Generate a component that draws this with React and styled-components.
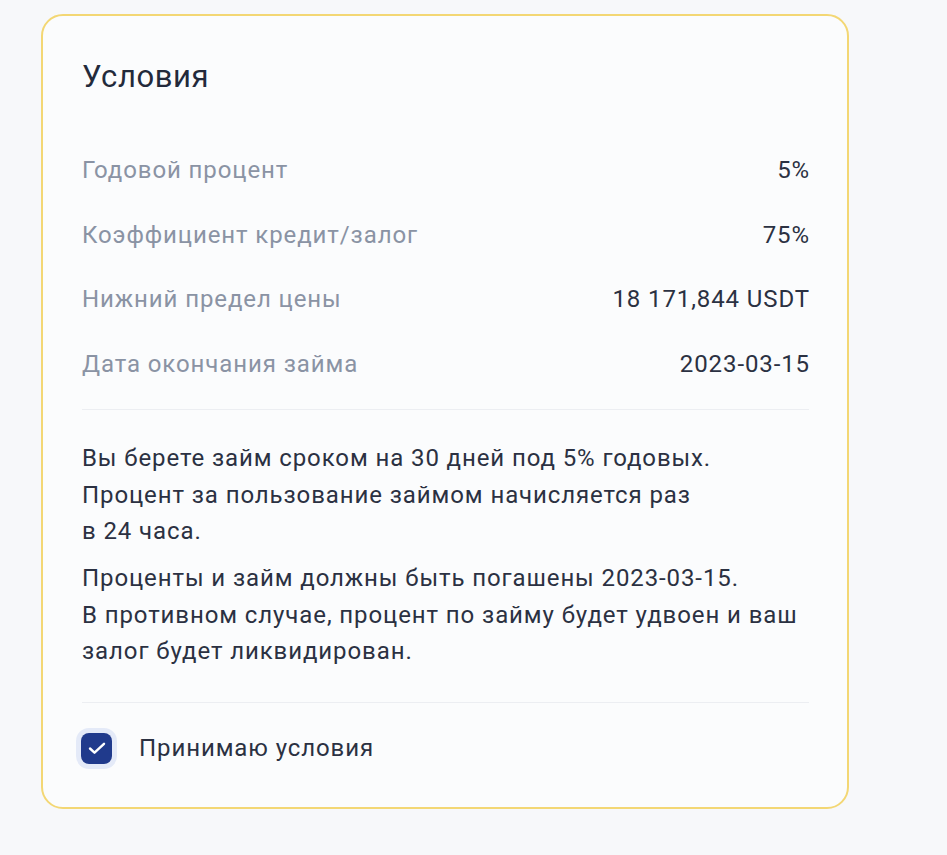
import React from "react";
import styled, { createGlobalStyle } from "styled-components";

const Global = createGlobalStyle`
  html, body { margin: 0; padding: 0; background: #f7f8fa; }
  body { font-family: Roboto, "Noto Sans", Arial, sans-serif; -webkit-font-smoothing: antialiased; }
`;

const Page = styled.div`
  padding: 14px 0 0 41px;
  width: 947px;
  height: 855px;
  box-sizing: border-box;
`;

const Card = styled.section`
  width: 808px;
  box-sizing: border-box;
  background: #fbfcfd;
  border: 2px solid #f3d774;
  border-radius: 22px;
  padding: 42px 38px 43px 39px;
  display: flex;
  flex-direction: column;
`;

const Title = styled.h2`
  margin: 0 0 56px;
  font-weight: 400;
  font-size: 31px;
  letter-spacing: 0.6px;
  line-height: 38px;
  color: #232a3b;
`;

const List = styled.div`
  display: flex;
  flex-direction: column;
  gap: 27.7px;
  padding-bottom: 26px;
  border-bottom: 1px solid #eceef2;
`;

const Row = styled.div`
  display: flex;
  justify-content: space-between;
  align-items: center;
  font-size: 24px;
  letter-spacing: 0.9px;
  line-height: 37px;
`;

const Label = styled.span`
  color: #8a93a4;
`;

const Value = styled.span`
  color: #2b3142;
  margin-right: -1px;
`;

const Text = styled.div`
  padding: 30px 0 32px;
  border-bottom: 1px solid #eceef2;
  display: flex;
  flex-direction: column;
  gap: 10.5px;
`;

const Para = styled.p`
  margin: 0;
  font-size: 24px;
  letter-spacing: 0.9px;
  line-height: 36.5px;
  color: #2b3142;
`;

const Check = styled.label`
  display: flex;
  align-items: center;
  gap: 27px;
  padding-top: 30px;
  font-size: 24px;
  letter-spacing: 0.9px;
  line-height: 31px;
  color: #2b3142;
  cursor: pointer;
`;

const Box = styled.span`
  width: 31px;
  height: 31px;
  margin-left: -1px;
  border-radius: 8px;
  background: #203a8c;
  box-shadow: 0 0 0 5px #e4eaf8;
  display: flex;
  align-items: center;
  justify-content: center;
  flex: none;
`;

const CheckMark = styled.svg`
  width: 20px;
  height: 20px;
  display: block;
`;

const rows = [
  ["Годовой процент", "5%"],
  ["Коэффициент кредит/залог", "75%"],
  ["Нижний предел цены", "18 171,844 USDT"],
  ["Дата окончания займа", "2023-03-15"],
];

export default function App() {
  return (
    <>
      <Global />
      <Page>
        <Card>
          <Title>Условия</Title>
          <List>
            {rows.map(([l, v]) => (
              <Row key={l}>
                <Label>{l}</Label>
                <Value>{v}</Value>
              </Row>
            ))}
          </List>
          <Text>
            <Para>
              Вы берете займ сроком на 30 дней под 5% годовых.
              <br />
              Процент за пользование займом начисляется раз
              <br />в 24 часа.
            </Para>
            <Para>
              Проценты и займ должны быть погашены 2023-03-15.
              <br />
              В противном случае, процент по займу будет удвоен и ваш
              <br />
              залог будет ликвидирован.
            </Para>
          </Text>
          <Check>
            <Box>
              <CheckMark viewBox="0 0 20 20" fill="none" stroke="#fff" strokeWidth="2.4" strokeLinecap="round" strokeLinejoin="round">
                <path d="M3 10.5l4.5 4.2L17 5.8" />
              </CheckMark>
            </Box>
            Принимаю условия
          </Check>
        </Card>
      </Page>
    </>
  );
}
